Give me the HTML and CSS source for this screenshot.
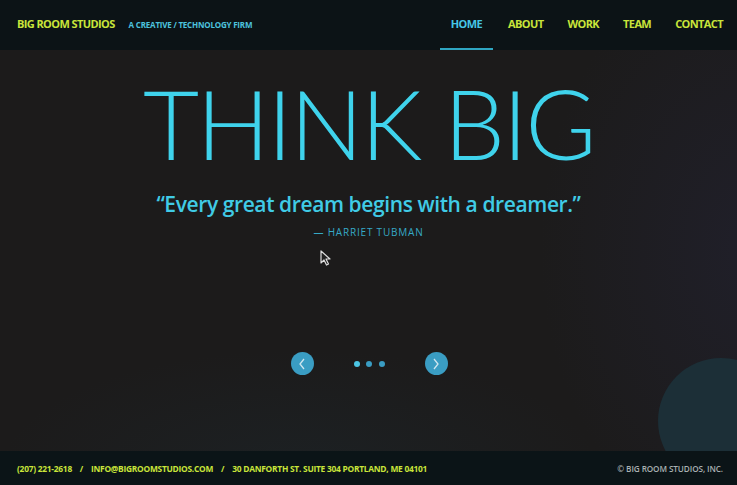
FILE: index.html
```html
<!DOCTYPE html>
<html>
<head>
<meta charset="utf-8">
<link rel="stylesheet" href="styles.css">
</head>
<body>
<div class="page">
  <header class="topbar">
    <div class="brand">
      <span class="logo">BIG ROOM STUDIOS</span>
      <span class="tagline">A CREATIVE / TECHNOLOGY FIRM</span>
    </div>
    <nav class="nav">
      <a class="nav-item active">HOME</a>
      <a class="nav-item">ABOUT</a>
      <a class="nav-item">WORK</a>
      <a class="nav-item">TEAM</a>
      <a class="nav-item">CONTACT</a>
    </nav>
  </header>
  <main class="hero">
    <div class="orb"></div>
    <h1 class="headline">THINK BIG</h1>
    <p class="quote">“Every great dream begins with a dreamer.”</p>
    <p class="author">— HARRIET TUBMAN</p>
    <svg class="cursor" width="11" height="16" viewBox="0 0 11 16"><path d="M1 1 L1 13 L4 10 L6.5 15 L8.5 14 L6 9 L10 9 Z" fill="#222" stroke="#ddd" stroke-width="1.2" stroke-linejoin="round"/></svg>
    <div class="controls">
      <button class="arrow"><svg width="8" height="12" viewBox="0 0 8 12"><path d="M6 1 L2 6 L6 11" fill="none" stroke="#cfe6ef" stroke-width="1.3"/></svg></button>
      <div class="dots"><span class="dot on"></span><span class="dot"></span><span class="dot"></span></div>
      <button class="arrow"><svg width="8" height="12" viewBox="0 0 8 12"><path d="M2 1 L6 6 L2 11" fill="none" stroke="#cfe6ef" stroke-width="1.3"/></svg></button>
    </div>
  </main>
  <footer class="footer">
    <div class="contact">(207) 221-2618 <span class="sep">/</span> INFO@BIGROOMSTUDIOS.COM <span class="sep">/</span> 30 DANFORTH ST. SUITE 304 PORTLAND, ME 04101</div>
    <div class="copy">© BIG ROOM STUDIOS, INC.</div>
  </footer>
</div>
</body>
</html>
```
FILE: styles.css
```css
* { box-sizing: border-box; }
html, body { margin: 0; padding: 0; }
body {
  width: 737px;
  height: 485px;
  overflow: hidden;
  background: #1c1b1b;
  font-family: "Open Sans", "DejaVu Sans", sans-serif;
}
.page {
  display: flex;
  flex-direction: column;
  height: 485px;
}
.topbar {
  height: 50px;
  flex: none;
  background: #0c1316;
  display: flex;
  align-items: center;
  justify-content: space-between;
  padding: 0 14px 0 17px;
  position: relative;
  z-index: 2;
}
.brand { display: flex; align-items: baseline; gap: 14px; margin-top: -4px; }
.logo {
  color: #c9e53a;
  font-weight: 700;
  font-size: 11px;
  letter-spacing: -0.6px;
}
.tagline {
  color: #4cc2de;
  font-weight: 700;
  font-size: 8px;
  letter-spacing: -0.2px;
}
.nav { display: flex; align-items: center; height: 50px; }
.nav-item {
  color: #c9e53a;
  font-weight: 700;
  font-size: 11px;
  letter-spacing: -0.6px;
  height: 50px;
  display: flex;
  align-items: center;
  padding: 0 12px 4px;
  position: relative;
}
.nav-item:last-child { padding-right: 0; }
.nav-item.active { color: #45c6e6; padding-left: 11px; padding-right: 11px; margin-right: 3px; }
.nav-item.active::after {
  content: "";
  position: absolute;
  left: 0;
  right: 0;
  bottom: 0;
  height: 2px;
  background: #2fa6c2;
}
.hero {
  flex: 1;
  position: relative;
  overflow: hidden;
  background:
    radial-gradient(ellipse 220px 300px at 760px 200px, rgba(40,40,70,0.35), rgba(0,0,0,0)),
    radial-gradient(ellipse 300px 120px at 300px 420px, rgba(30,50,60,0.25), rgba(0,0,0,0)),
    #1c1b1b;
  display: flex;
  flex-direction: column;
  align-items: center;
}
.orb {
  position: absolute;
  left: 658px;
  top: 308px;
  width: 126px;
  height: 126px;
  border-radius: 50%;
  background: #1c2f37;
}
.headline {
  margin: 24px 0 0;
  font-family: "Lato", sans-serif;
  font-weight: 300;
  font-size: 97px;
  line-height: 98px;
  letter-spacing: -2.5px;
  color: #3fd3ec;
  padding-left: 0;
}
.quote {
  margin: 20px 0 0;
  font-family: "Open Sans", sans-serif;
  font-weight: 600;
  font-size: 21px;
  line-height: 24px;
  letter-spacing: -0.4px;
  color: #40cbe6;
}
.author {
  margin: 9px 0 0;
  font-family: "Open Sans", sans-serif;
  font-size: 10px;
  letter-spacing: 0.8px;
  color: #36a9c6;
}
.cursor {
  position: absolute;
  left: 320px;
  top: 200px;
}
.controls {
  margin-top: 113px;
  display: flex;
  align-items: center;
  gap: 0;
  margin-left: 1px;
}
.arrow {
  width: 23px;
  height: 23px;
  border-radius: 50%;
  border: 0;
  padding: 0;
  background: #3a9dc3;
  display: flex;
  align-items: center;
  justify-content: center;
}
.dots {
  display: flex;
  gap: 6.5px;
  margin: 0 40px 0 40px;
}
.dot {
  width: 6px;
  height: 6px;
  border-radius: 50%;
  background: #3a9dc3;
}
.dot.on { background: #4cc6e4; }
.footer {
  height: 34px;
  flex: none;
  background: #0b1417;
  display: flex;
  align-items: center;
  justify-content: space-between;
  padding: 0 14px 0 17px;
  position: relative;
  z-index: 2;
}
.contact {
  color: #c9e53a;
  font-weight: 700;
  font-size: 8.4px;
  letter-spacing: -0.25px;
}
.sep { margin: 0 6px; }
.copy {
  color: #a9b0b2;
  font-weight: 600;
  font-size: 8.2px;
  letter-spacing: -0.1px;
}
```
